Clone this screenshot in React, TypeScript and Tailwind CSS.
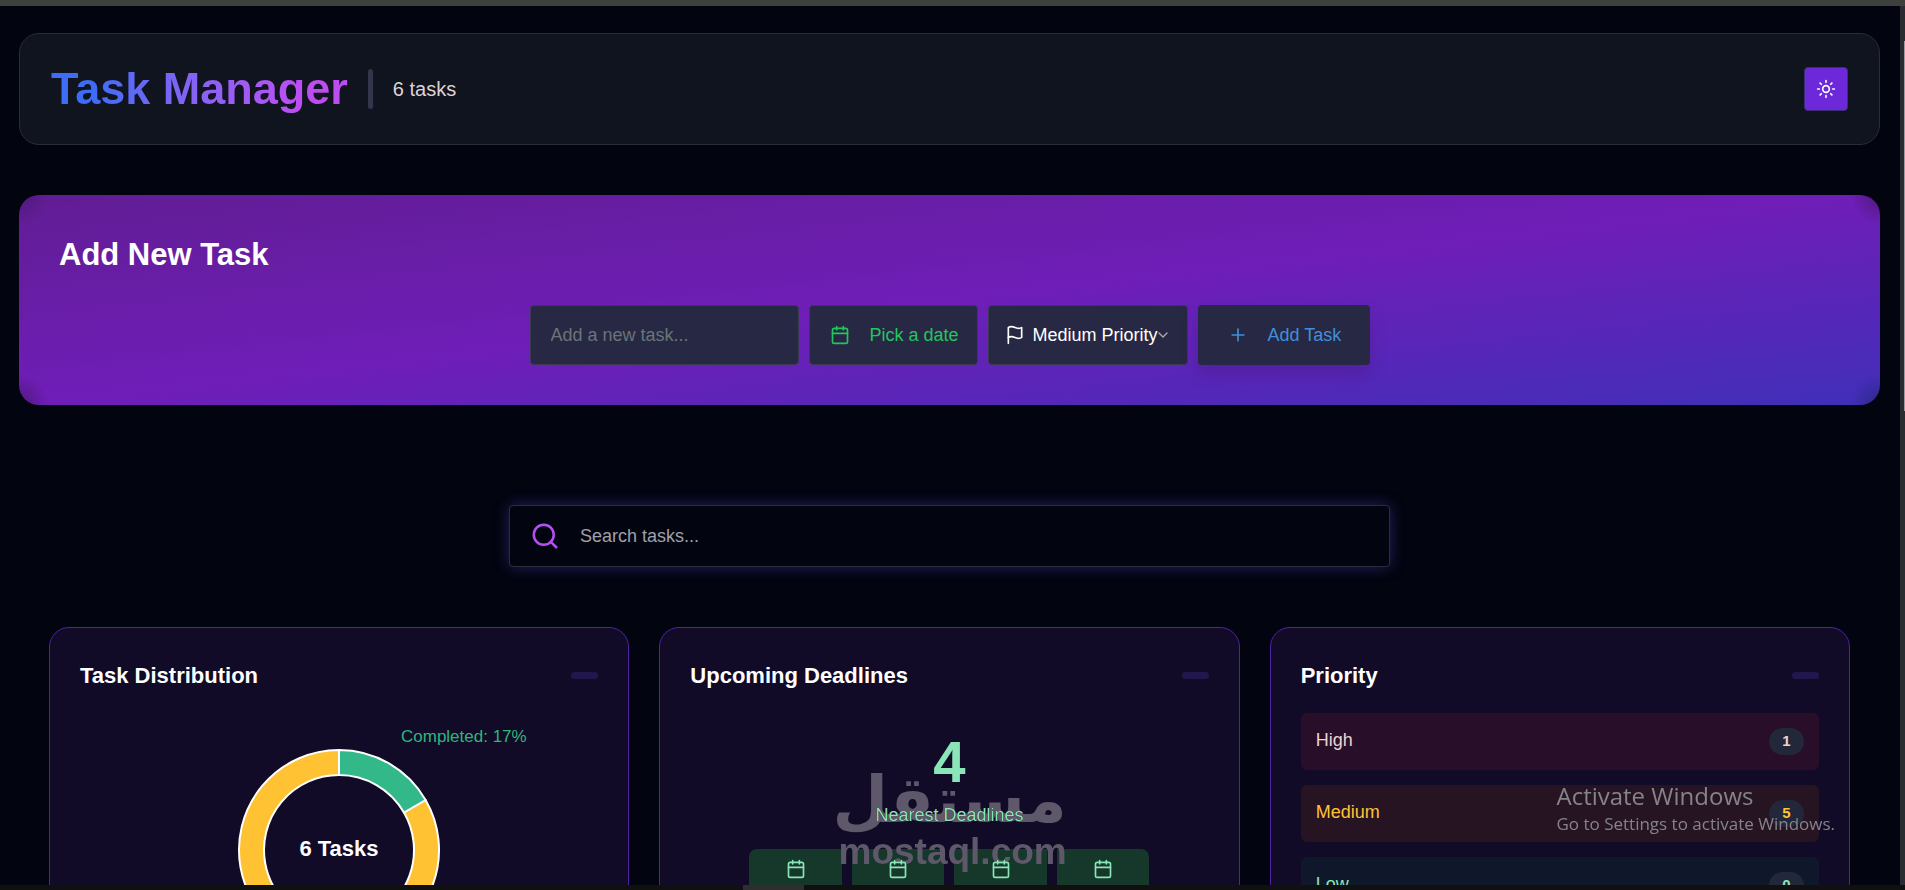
import React, { useState } from "react";
import { Calendar, ChevronDown, Plus, Search, Sun } from "lucide-react";

const priorities = [
  { name: "High", count: 1, row: "bg-[#290e29]", text: "text-[#ecd3cf]" },
  { name: "Medium", count: 5, row: "bg-[#271422]", text: "text-[#ffc233]" },
  { name: "Low", count: 0, row: "bg-[#0f182b]", text: "text-[#8ae6b9]" },
];

const deadlines = ["first", "second", "third", "fourth"];

const FlagIcon = () => (
  <svg
    viewBox="0 0 24 24"
    className="h-5 w-5 shrink-0"
    fill="none"
    stroke="currentColor"
    strokeWidth="2"
    strokeLinecap="round"
    strokeLinejoin="round"
    aria-hidden="true"
  >
    <path d="M4 15s1-1 4-1 5 2 8 2 4-1 4-1V3s-1 1-4 1-5-2-8-2-4 1-4 1z" />
    <line x1="4" x2="4" y1="22" y2="15" />
  </svg>
);

const Header = () => (
  <header className="flex h-28 items-center justify-between rounded-[20px] border border-[#2a2d35] bg-[#10141e] px-[31px]">
    <div className="flex items-center gap-5">
      <h1 className="bg-linear-to-r from-[#3f6cf6] from-15% to-[#bd4df2] to-85% bg-clip-text text-[45px] leading-[54px] font-bold text-transparent">
        Task Manager
      </h1>
      <span className="h-10 w-[5px] rounded-sm bg-[#33364b]"></span>
      <p className="text-xl text-[#dfd3d6]">6 tasks</p>
    </div>
    <button
      type="button"
      aria-label="Toggle theme"
      className="flex h-11 w-11 items-center justify-center rounded-sm border border-[#3a2f75] bg-[#6d28d9] text-white"
    >
      <Sun size={20} />
    </button>
  </header>
);

const AddTask = () => {
  const [title, setTitle] = useState("");
  const [priority, setPriority] = useState("Medium");

  return (
    <section className="mt-[50px] h-[210px] rounded-[20px] bg-[radial-gradient(circle_at_0_0,#50187c_0,transparent_30px),radial-gradient(circle_at_100%_0,#50187c_0,transparent_30px),radial-gradient(circle_at_0_100%,#50187c_0,transparent_30px),radial-gradient(circle_at_100%_100%,#2e2888_0,transparent_30px),linear-gradient(to_bottom_right,#611d94,#6f1eb8_50%,#402fb8)] px-10 pt-10">
      <h2 className="text-[31px] leading-10 font-bold text-white">Add New Task</h2>
      <form
        className="mt-[30px] flex h-[60px] justify-center gap-2.5 text-lg"
        onSubmit={(e) => e.preventDefault()}
      >
        <input
          type="text"
          aria-label="New task"
          placeholder="Add a new task..."
          value={title}
          onChange={(e) => setTitle(e.target.value)}
          className="w-[269px] rounded-sm border border-[#3a3a50] bg-[#272843] px-5 text-white outline-none placeholder:text-[#6b7478]"
        />
        <button
          type="button"
          className="flex w-[169px] items-center gap-5 rounded-sm border border-[#3a3a50] bg-[#272843] px-5 whitespace-nowrap text-[#22c55e]"
        >
          <Calendar size={20} className="shrink-0" />
          Pick a date
        </button>
        <label className="flex w-[200px] items-center rounded-sm border border-[#3a3a50] bg-[#272843] pl-4 text-white">
          <FlagIcon />
          <select
            aria-label="Priority"
            value={priority}
            onChange={(e) => setPriority(e.target.value)}
            className="ml-2 appearance-none bg-transparent outline-none"
          >
            <option value="High">High Priority</option>
            <option value="Medium">Medium Priority</option>
            <option value="Low">Low Priority</option>
          </select>
          <ChevronDown size={16} className="-ml-1 shrink-0 opacity-60" />
        </label>
        <button
          type="submit"
          className="flex w-[172px] items-center gap-5 rounded-sm bg-[#272843] pl-[30px] whitespace-nowrap text-[#3f8fdc] shadow-[0_10px_15px_rgba(80,20,130,0.4)]"
        >
          <Plus size={20} />
          Add Task
        </button>
      </form>
    </section>
  );
};

const SearchBar = () => (
  <label className="mx-auto mt-[100px] flex h-[62px] w-[881px] max-w-full items-center gap-5 rounded-sm border border-[#2c2d3c] bg-[#02040f] pl-5 shadow-[0_0_15px_rgba(91,63,190,0.45)]">
    <Search size={30} className="shrink-0 text-[#b44ff2]" />
    <input
      type="search"
      aria-label="Search tasks"
      placeholder="Search tasks..."
      className="flex-1 bg-transparent text-lg text-white outline-none placeholder:text-[#a0a0ac]"
    />
  </label>
);

const Card = ({ title, children }: { title: string; children: React.ReactNode }) => (
  <section className="h-[440px] min-w-0 flex-1 rounded-[20px] border border-[#4f22a6] bg-[#110b28] px-[30px] pt-[29px]">
    <div className="flex h-9 items-center justify-between">
      <h3 className="text-[22px] font-bold text-white">{title}</h3>
      <span className="h-[7px] w-[27px] rounded-sm bg-[#20184c]"></span>
    </div>
    {children}
  </section>
);

const TaskChart = () => (
  <svg
    viewBox="0 0 518 300"
    className="mx-auto mt-[21px] block h-[300px] w-[518px]"
    role="img"
    aria-label="Completed: 17%"
  >
    <g stroke="#fff" strokeWidth="2">
      {/* rest of the ring */}
      <path
        d="M345.6 86 A100 100 0 1 1 259 36 L259 61 A75 75 0 1 0 323.95 98.5 Z"
        fill="#ffc233"
      />
      <path
        d="M259 36 A100 100 0 0 1 345.6 86 L323.95 98.5 A75 75 0 0 0 259 61 Z"
        fill="#33b88a"
      />
    </g>
    <text x="321" y="28" fill="#2fb67c" fontSize="17">
      Completed: 17%
    </text>
    <text x="259" y="142" fill="#fff" fontSize="22" fontWeight="bold" textAnchor="middle">
      6 Tasks
    </text>
  </svg>
);

const Deadlines = () => (
  <div className="mt-10 text-center text-[#8ae6b9]">
    <p className="text-[58px] leading-[58px] font-bold">4</p>
    <p className="mt-2.5 text-lg leading-7">Nearest Deadlines</p>
    <ul className="mx-auto mt-5 flex h-28 w-[400px] max-w-full gap-2.5 overflow-hidden rounded-lg">
      {deadlines.map((d) => (
        <li key={d} className="flex flex-1 justify-center bg-[#15382b] pt-2.5">
          <Calendar size={20} />
        </li>
      ))}
    </ul>
  </div>
);

const Priority = () => (
  <ul className="mt-5 flex flex-col gap-[15px]">
    {priorities.map((p) => (
      <li
        key={p.name}
        className={`flex h-[57px] items-start justify-between rounded-md px-[15px] pt-[15px] ${p.row} ${p.text}`}
      >
        <span className="text-lg leading-6">{p.name}</span>
        <span className="flex h-[27px] w-[35px] items-center justify-center rounded-full bg-[#22273a] text-[15px] font-bold">
          {p.count}
        </span>
      </li>
    ))}
  </ul>
);

const App = () => {
  return (
    <div className="flex h-screen flex-col overflow-hidden bg-[#02040f] font-['Liberation_Sans',Arial,sans-serif]">
      <div className="h-1.5 shrink-0 bg-[#3e403d]"></div>
      <div className="flex min-h-0 flex-1">
        <main className="min-w-0 flex-1 overflow-hidden pt-[27px] pr-5 pl-[19px]">
          <Header />
          <AddTask />
          <SearchBar />
          <div className="mt-[60px] flex gap-[30px] px-[30px]">
            <Card title="Task Distribution">
              <TaskChart />
            </Card>
            <Card title="Upcoming Deadlines">
              <Deadlines />
            </Card>
            <Card title="Priority">
              <Priority />
            </Card>
          </div>
        </main>
        {/* Vertical scrollbar */}
        <div className="w-[5px] shrink-0 bg-[#2a2c31] pt-[35px] pl-1">
          <div className="h-[370px] bg-[#9a9a9e]"></div>
        </div>
      </div>
      {/* Bottom edge */}
      <div className="flex h-[5px] shrink-0 bg-[#101010]">
        <div className="ml-[39%] h-full w-[61px] bg-[#2e2e31]"></div>
      </div>

      {/* Watermark */}
      <div className="pointer-events-none fixed bottom-[18px] left-1/2 w-[228px] -translate-x-1/2 text-center text-[#5e586a] mix-blend-lighten">
        <p
          lang="ar"
          dir="rtl"
          className="font-['DejaVu_Sans',sans-serif] text-[64px] leading-[64px] font-bold whitespace-nowrap"
        >
          مستقل
        </p>
        <p className="text-[37px] leading-10 font-bold">mostaql.com</p>
      </div>

      {/* Activation notice */}
      <div className="pointer-events-none fixed right-[70px] bottom-[54px] font-['Open_Sans',sans-serif] whitespace-nowrap text-[#84848a]">
        <p className="text-2xl leading-8">Activate Windows</p>
        <p className="text-[17px] leading-6">Go to Settings to activate Windows.</p>
      </div>
    </div>
  );
};

export default App;
